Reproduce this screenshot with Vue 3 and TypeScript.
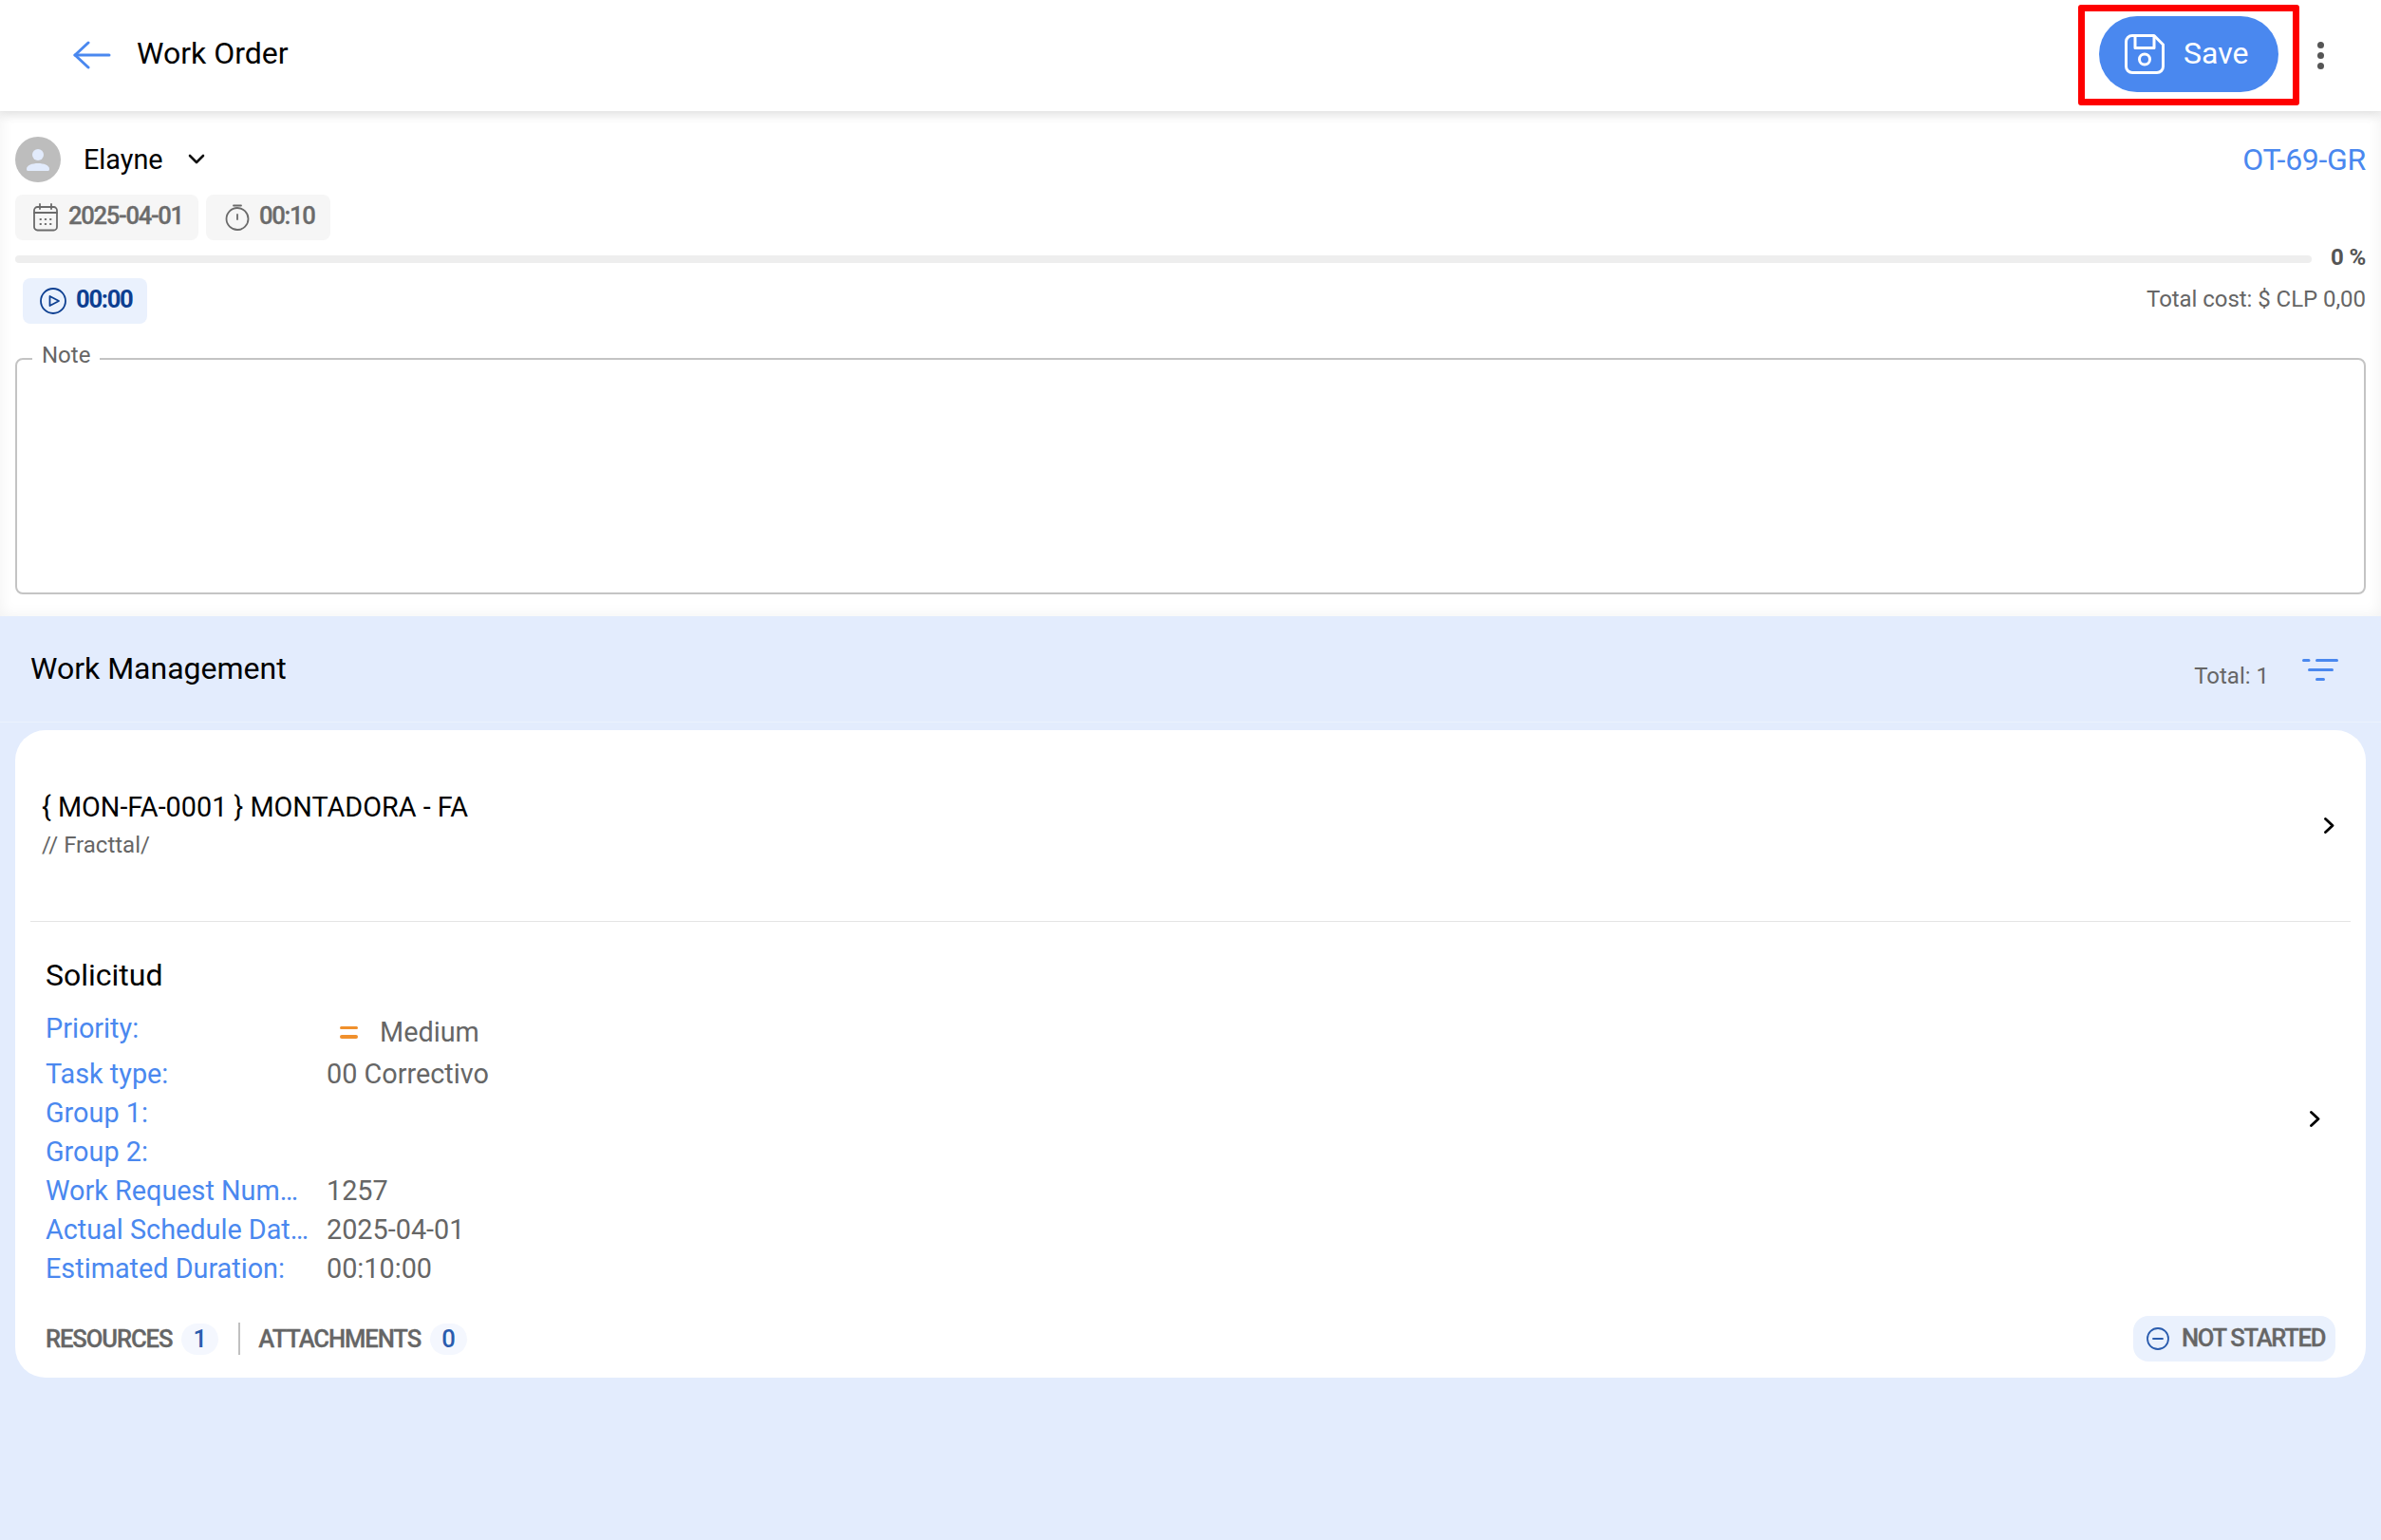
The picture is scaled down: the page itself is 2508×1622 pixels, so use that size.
<script setup lang="ts">
const rows: { label: string; value: string }[] = [
  { label: 'Task type:', value: '00 Correctivo' },
  { label: 'Group 1:', value: '' },
  { label: 'Group 2:', value: '' },
  { label: 'Work Request Num…', value: '1257' },
  { label: 'Actual Schedule Dat…', value: '2025-04-01' },
  { label: 'Estimated Duration:', value: '00:10:00' },
]
</script>

<template>
  <div class="page">
    <header class="topbar">
      <div class="top-left">
        <svg class="back" width="42" height="30" viewBox="0 0 42 30" fill="none" stroke="#4a88ef" stroke-width="3" stroke-linecap="round" stroke-linejoin="round">
          <path d="M2 15H38" /><path d="M16 2L2 15L16 28" />
        </svg>
        <span class="page-title">Work Order</span>
      </div>
      <div class="top-right">
        <div class="highlight">
          <button class="save">
            <svg width="42" height="42" viewBox="0 0 42 42" fill="none" stroke="#fff" stroke-width="3" stroke-linejoin="round">
              <path d="M8 1.5H31L40.5 11V34A6.5 6.5 0 0 1 34 40.5H8A6.5 6.5 0 0 1 1.5 34V8A6.5 6.5 0 0 1 8 1.5Z" />
              <path d="M11 1.5V14.5H31V1.5" />
              <circle cx="21" cy="26.5" r="5.5" />
            </svg>
            <span class="save-text">Save</span>
          </button>
        </div>
        <div class="dots"><i></i><i></i><i></i></div>
      </div>
    </header>

    <section class="summary">
      <div class="user-row">
        <div class="user">
          <div class="avatar">
            <svg width="48" height="48" viewBox="0 0 48 48">
              <circle cx="24" cy="19" r="6" fill="#e2ebfc" />
              <path d="M12 34C12 30 18 28 24 28C30 28 36 30 36 34C36 36 35 36 34 36H14C13 36 12 36 12 34Z" fill="#e2ebfc" />
            </svg>
          </div>
          <span class="user-name">Elayne</span>
          <svg width="18" height="12" viewBox="0 0 18 12" fill="none" stroke="#111" stroke-width="2.6" stroke-linecap="round" stroke-linejoin="round">
            <path d="M2 2L9 9L16 2" />
          </svg>
        </div>
        <span class="code">OT-69-GR</span>
      </div>

      <div class="chips">
        <div class="chip">
          <svg width="26" height="30" viewBox="0 0 26 30" fill="none" stroke="#6b6b6b" stroke-width="1.8" stroke-linecap="round">
            <rect x="1" y="4" width="24" height="24.5" rx="3.5" />
            <path d="M1 10H25M7 1V6M19 1V6" />
            <path d="M7.5 17H8M12.7 17H13.2M18 17H18.5M7.5 22H8M12.7 22H13.2M18 22H18.5" stroke-width="2" />
          </svg>
          <span class="tight">2025-04-01</span>
        </div>
        <div class="chip chip-time">
          <svg width="26" height="28" viewBox="0 0 26 28" fill="none" stroke="#6b6b6b" stroke-width="1.8" stroke-linecap="round">
            <circle cx="13" cy="15.5" r="11.5" />
            <path d="M9 1.5H17M13 11V16" />
          </svg>
          <span class="tight">00:10</span>
        </div>
      </div>

      <div class="progress-row">
        <div class="progress"></div>
        <span class="percent">0 %</span>
      </div>

      <div class="timer-row">
        <div class="timer">
          <svg width="28" height="28" viewBox="0 0 28 28" fill="none" stroke="#0d3f91" stroke-width="1.8" stroke-linejoin="round">
            <circle cx="14" cy="14" r="13" />
            <path d="M10.5 9V19L20 14Z" />
          </svg>
          <span class="timer-text">00:00</span>
        </div>
        <span class="cost">Total cost: $ CLP 0,00</span>
      </div>

      <fieldset class="note">
        <legend>Note</legend>
      </fieldset>
    </section>

    <section class="management">
      <div class="mgmt-head">
        <h2>Work Management</h2>
        <div class="mgmt-right">
          <span class="total">Total: 1</span>
          <svg class="filter" width="38" height="23" viewBox="0 0 38 23" fill="none" stroke="#4a88ef" stroke-width="3" stroke-linecap="round">
            <path d="M1.5 1.5H7M15.5 1.5H36.5M7.5 11.5H31.5M15.5 21.5H22.5" />
          </svg>
        </div>
      </div>

      <div class="card">
        <div class="asset">
          <div>
            <div class="asset-title">{ MON-FA-0001 } MONTADORA - FA</div>
            <div class="asset-path">// Fracttal/</div>
          </div>
          <svg class="chev" width="11" height="17" viewBox="0 0 11 17" fill="none" stroke="#000" stroke-width="2.8" stroke-linecap="round" stroke-linejoin="round">
            <path d="M1.5 1.5L9 8.5L1.5 15.5" />
          </svg>
        </div>

        <div class="detail">
          <div class="detail-main">
            <h3>Solicitud</h3>
            <div class="priority-row">
              <span class="label">Priority:</span>
              <span class="priority-value">
                <span class="equals"><i></i><i></i></span>
                Medium
              </span>
            </div>
            <div v-for="row in rows" :key="row.label" class="row">
              <span class="label">{{ row.label }}</span>
              <span class="value">{{ row.value }}</span>
            </div>
          </div>
          <svg class="chev2" width="11" height="17" viewBox="0 0 11 17" fill="none" stroke="#000" stroke-width="2.8" stroke-linecap="round" stroke-linejoin="round">
            <path d="M1.5 1.5L9 8.5L1.5 15.5" />
          </svg>
        </div>

        <div class="footer">
          <div class="tabs">
            <span class="tab">RESOURCES</span>
            <span class="count">1</span>
            <span class="sep"></span>
            <span class="tab">ATTACHMENTS</span>
            <span class="count">0</span>
          </div>
          <div class="status">
            <svg width="24" height="24" viewBox="0 0 24 24" fill="none" stroke="#2a5cae" stroke-width="1.8" stroke-linecap="round">
              <circle cx="12" cy="12" r="11" /><path d="M7 12H17" />
            </svg>
            <span class="status-text">NOT STARTED</span>
          </div>
        </div>
      </div>
    </section>
  </div>
</template>

<style>
html, body { margin: 0; background: #fff; }
</style>

<style scoped>
.page {
  width: 2508px;
  height: 1622px;
  display: flex;
  flex-direction: column;
  overflow: hidden;
  font-family: Roboto, "Liberation Sans", sans-serif;
  background: #e3ecfd;
}
.topbar {
  height: 117px;
  flex: none;
  box-sizing: border-box;
  background: #fff;
  display: flex;
  align-items: flex-start;
  justify-content: space-between;
  padding: 5px 60px 0 77px;
  box-shadow: 0 2px 12px rgba(0, 0, 0, 0.12);
  position: relative;
  z-index: 1;
}
.top-left { display: flex; align-items: center; gap: 25px; height: 102px; }
.back { margin-top: 3px; }
.page-title { font-size: 32px; color: #000; }
.top-right { display: flex; align-items: center; gap: 19px; }
.highlight {
  border: 7px solid #fe0000;
  border-radius: 3px;
  padding: 5px 15px 7px;
  background: #fff;
}
.save {
  width: 189px;
  height: 80px;
  border: 0;
  border-radius: 40px;
  background: #4a88ef;
  color: #fff;
  font: 32px Roboto, sans-serif;
  display: flex;
  align-items: center;
  justify-content: flex-start;
  gap: 20px;
  padding: 0 0 0 27px;
}
.save-text { padding-bottom: 3px; }
.dots { display: flex; flex-direction: column; gap: 4px; }
.dots i { width: 7px; height: 7px; border-radius: 50%; background: #555; display: block; }

.summary {
  background: #fff;
  height: 532px;
  flex: none;
  box-sizing: border-box;
  padding: 27px 16px 0;
  box-shadow: inset 0 0 16px rgba(0, 0, 0, 0.06);
}
.user-row { display: flex; justify-content: space-between; align-items: center; height: 48px; }
.user { display: flex; align-items: center; }
.avatar {
  width: 48px;
  height: 48px;
  border-radius: 50%;
  background: #bdbdbd;
  display: flex;
}
.user-name { font-size: 28.8px; color: #000; margin: 0 26px 0 24px; }
.code { font-size: 32px; color: #4a88ef; letter-spacing: -0.3px; }
.chips { display: flex; gap: 8px; margin-top: 13px; }
.chip {
  height: 48px;
  box-sizing: border-box;
  width: 193px;
  background: #f6f6f6;
  border-radius: 8px;
  display: flex;
  align-items: center;
  gap: 11px;
  padding-left: 19px;
  font-size: 25.6px;
  font-weight: 500;
  color: #6b6b6b;
}
.tight { letter-spacing: -1.3px; padding-bottom: 4px; -webkit-text-stroke: 0.3px currentColor; }
.timer-text { letter-spacing: -1.3px; padding-bottom: 4px; }
.status-text { letter-spacing: -1.3px; padding-bottom: 2px; -webkit-text-stroke: 0.3px currentColor; }
.chip-time { width: 131px; padding-left: 20px; gap: 10px; }
.progress-row { display: flex; align-items: center; margin-top: 16px; height: 8px; gap: 20px; }
.progress { flex: 1; height: 8px; background: #eeeeee; border-radius: 4px; }
.percent { font-size: 24px; font-weight: 700; color: #555; white-space: nowrap; padding-bottom: 5px; letter-spacing: -0.2px; }
.timer-row { display: flex; justify-content: space-between; align-items: center; margin-top: 16px; padding-left: 8px; }
.timer {
  width: 131px;
  height: 48px;
  box-sizing: border-box;
  background: #eaf1fd;
  border-radius: 8px;
  display: flex;
  align-items: center;
  gap: 10px;
  padding-left: 18px;
  font-size: 25.6px;
  font-weight: 700;
  color: #0d3f91;
}
.cost { font-size: 24px; color: #666; padding-bottom: 4px; letter-spacing: -0.05px; }
.note {
  margin: 25px 0 0;
  padding: 0 16px;
  height: 260px;
  box-sizing: border-box;
  border: 2px solid #c4c4c4;
  border-radius: 8px;
}
.note legend { font-size: 24px; color: #666; padding: 0 10px 8px; line-height: 16px; }

.management { flex: 1; padding: 0 16px; }
.mgmt-head {
  height: 112px;
  margin: 0 -16px 8px;
  border-bottom: 1px solid rgba(255, 255, 255, 0.3);
  display: flex;
  justify-content: space-between;
  align-items: center;
  padding: 0 45px 2px 32px;
  box-sizing: border-box;
}
.mgmt-head h2 { margin: 0; font-size: 32px; font-weight: 400; color: #000; }
.mgmt-right { display: flex; align-items: flex-start; gap: 35px; }
.total { font-size: 24px; color: #666; margin-top: 17px; }
.filter { margin-top: 13px; }
.card {
  height: 682px;
  background: #fff;
  border-radius: 32px;
  box-sizing: border-box;
  padding: 0 16px;
  display: flex;
  flex-direction: column;
}
.asset {
  height: 202px;
  flex: none;
  border-bottom: 1px solid #e4e4e4;
  box-sizing: border-box;
  display: flex;
  align-items: center;
  justify-content: space-between;
  padding: 0 17px 0 12px;
}
.asset-title { font-size: 28.8px; color: #000; line-height: 38px; }
.asset-path { font-size: 24px; color: #666; line-height: 32px; margin-top: 5px; }
.asset > div { margin-bottom: 3px; }
.detail { flex: 1; display: flex; justify-content: space-between; align-items: center; padding: 0 32px 0 16px; }
.detail-main { align-self: flex-start; padding-top: 35.5px; }
h3 { margin: 0 0 16px; font-size: 32px; font-weight: 400; color: #000; line-height: 40px; }
.row, .priority-row { display: flex; font-size: 28.8px; line-height: 41px; }
.row { min-height: 41px; }
.priority-row { height: 48px; }
.label {
  width: 280px;
  margin-right: 16px;
  color: #4a88ef;
  white-space: nowrap;
}
.priority-row .label { margin-top: 0; }
.value, .priority-value { color: #666; }
.priority-value { display: flex; align-items: center; height: 41px; margin-top: 4px; }
.equals { display: flex; flex-direction: column; gap: 6px; margin: 0 23px 0 14px; }
.equals i { display: block; width: 19px; height: 3.5px; background: #f0902c; border-radius: 2px; }
.chev2 { margin-top: 0; }
.footer {
  height: 48px;
  flex: none;
  margin-bottom: 17px;
  padding: 0 16px;
  display: flex;
  align-items: center;
  justify-content: space-between;
}
.tabs { display: flex; align-items: center; }
.tab { font-size: 25.6px; font-weight: 500; color: #666; letter-spacing: -1.1px; -webkit-text-stroke: 0.3px currentColor; }
.count {
  width: 39px;
  height: 33px;
  margin-left: 10px;
  border-radius: 17px;
  background: #f4f7fe;
  color: #2a5cae;
  font-size: 25.6px;
  font-weight: 500;
  display: flex;
  align-items: center;
  justify-content: center;
}
.sep { width: 2px; height: 34px; background: #c0c0c0; margin: 0 19px 0 21px; }
.status {
  height: 48px;
  width: 213px;
  box-sizing: border-box;
  border-radius: 16px;
  background: #eaf1fd;
  display: flex;
  align-items: center;
  gap: 13px;
  padding-left: 14px;
  font-size: 25.6px;
  font-weight: 500;
  color: #666;
}
</style>
